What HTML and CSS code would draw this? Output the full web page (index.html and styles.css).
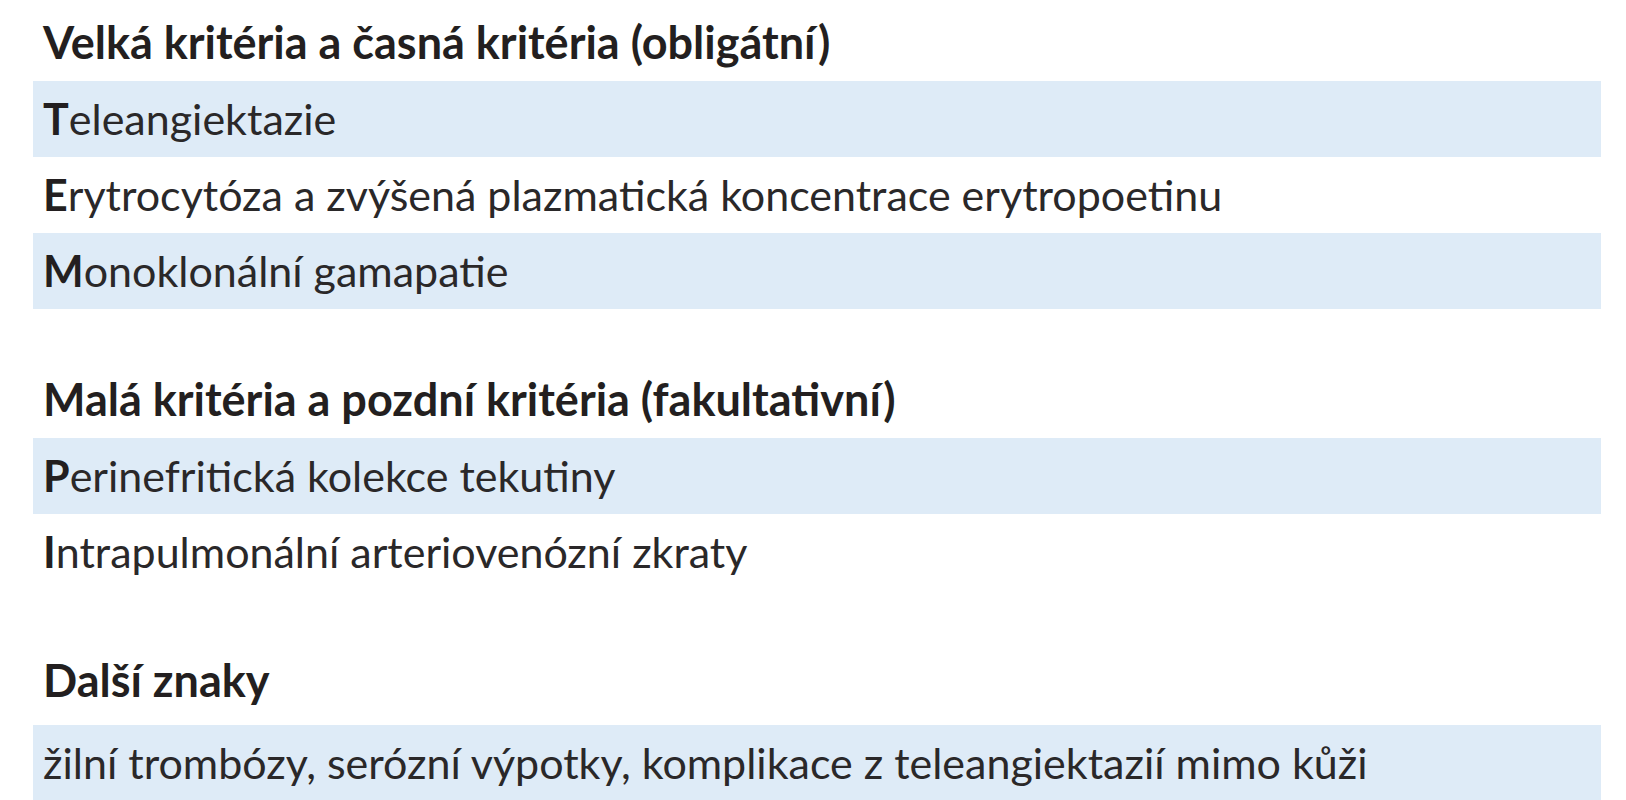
FILE: index.html
```html
<!DOCTYPE html>
<html lang="cs">
<head>
<meta charset="utf-8">
<title>Kritéria</title>
<link rel="stylesheet" href="styles.css">
</head>
<body>
<div class="table">
  <section class="group">
    <div class="title">Velká kritéria a časná kritéria (obligátní)</div>
    <div class="row shaded"><b>T</b>eleangiektazie</div>
    <div class="row"><b>E</b>rytrocytóza a zvýšená plazmatická koncentrace erytropoetinu</div>
    <div class="row shaded"><b>M</b>onoklonální gamapatie</div>
  </section>
  <section class="group">
    <div class="title">Malá kritéria a pozdní kritéria (fakultativní)</div>
    <div class="row shaded"><b>P</b>erinefritická kolekce tekutiny</div>
    <div class="row"><b>I</b>ntrapulmonální arteriovenózní zkraty</div>
  </section>
  <section class="group group-last">
    <div class="title">Další znaky</div>
    <div class="row shaded">žilní trombózy, serózní výpotky, komplikace z teleangiektazií mimo kůži</div>
  </section>
</div>
</body>
</html>
```
FILE: styles.css
```css
html, body {
  margin: 0;
  padding: 0;
  background: #ffffff;
}
body {
  font-family: Lato, "Liberation Sans", sans-serif;
  color: #231f20;
  font-size: 43px;
}
.table {
  width: 1568px;
  margin-left: 33px;
  display: flex;
  flex-direction: column;
  padding-top: 14px;
}
.group {
  display: flex;
  flex-direction: column;
}
.group + .group {
  margin-top: 62px;
}
.group.group-last {
  margin-top: 62px;
}
.title {
  height: 56px;
  line-height: 56px;
  padding: 0 10px 11px;
  font-size: 45px;
  font-weight: 700;
  white-space: nowrap;
}
.group-last .title {
  padding-bottom: 17px;
}
.row {
  height: 76px;
  line-height: 76px;
  padding: 0 10px;
  white-space: nowrap;
  color: #2a2829;
}
.row b {
  font-weight: 700;
  color: #231f20;
}
.shaded {
  background: #deebf7;
}
```
